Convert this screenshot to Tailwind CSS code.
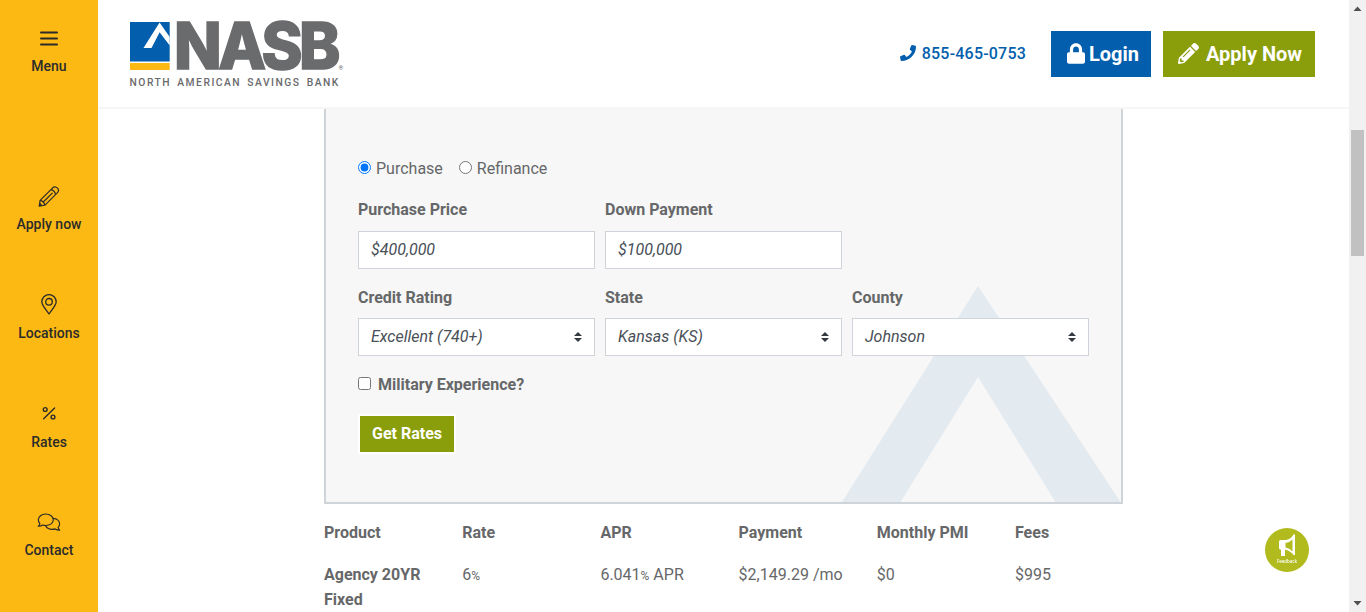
<!DOCTYPE html>
<html lang="en">
<head>
<meta charset="utf-8">
<title>NASB Rates</title>
<script src="https://cdn.jsdelivr.net/npm/@tailwindcss/browser@4"></script>
</head>
<body class="flex h-[612px] w-[1366px] overflow-hidden bg-white font-['Roboto',sans-serif] text-base text-[#666769]">

<nav class="flex w-[98px] shrink-0 flex-col items-center bg-[#fdb913] text-sm font-medium leading-5 text-[#2b2b2b]">
  <a class="flex h-[158px] flex-col items-center pt-7">
    <svg class="h-5 w-5" viewBox="0 0 20 20" fill="none" stroke="currentColor" stroke-width="2" stroke-linecap="round"><path d="M2 4.4h16M2 10.5h16M2 16.6h16"/></svg>
    <span class="mt-2">Menu</span>
  </a>
  <a class="flex h-[109px] flex-col items-center pt-7">
    <svg class="h-[22px] w-[22px]" viewBox="0 0 22 22" fill="none" stroke="currentColor" stroke-width="1.2" stroke-linejoin="round"><path d="M1.300 20l.8-5.600L14.700 1.800q1.800-1.600 3.600-.6 1.900 1 2.200 2.700.2 1.500-1 2.700L7 19.200z"/><path d="M12.900 3.600q3.800.7 4.600 4.800M2.100 14.400q3.700.7 4.900 4.800M4.800 16.500l9.700-9.700M1.300 20l.5-2.500 1.900 1.900z"/></svg>
    <span class="mt-1.5">Apply now</span>
  </a>
  <a class="flex h-[109px] flex-col items-center pt-[27px]">
    <svg class="h-[22px] w-[18px]" viewBox="0 0 18 22" fill="none" stroke="currentColor" stroke-width="1.300"><path d="M9 20C6.600 16.300 1.800 11.500 1.800 7.800a7.200 7.200 0 0 1 14.400 0C16.200 11.500 11.400 16.300 9 20z" stroke-linejoin="round"/><circle cx="9" cy="7.800" r="3.300"/></svg>
    <span class="mt-[7px]">Locations</span>
  </a>
  <a class="flex h-[109px] flex-col items-center pt-[29px]">
    <svg class="h-4 w-4" viewBox="0 0 16 16" fill="none" stroke="currentColor" stroke-width="1.400" stroke-linecap="round"><path d="M2.700 13.700L13.600 3"/><circle cx="4.200" cy="4.500" r="1.900"/><circle cx="12" cy="12" r="1.900"/></svg>
    <span class="mt-[11px]">Rates</span>
  </a>
  <a class="flex h-[109px] flex-col items-center pt-7">
    <svg class="h-[18px] w-6" viewBox="0 0 24 18" fill="none" stroke="currentColor" stroke-width="1.200" stroke-linejoin="round" stroke-linecap="round"><path d="M8.800 1C13 1 16.300 3.500 16.300 6.800S13 12.500 8.800 12.500q-1.600 0-3-.5-1.800 1.300-4.500 1.200 1.300-1.200 1.600-2.700Q1.300 9 1.300 6.800C1.300 3.500 4.600 1 8.800 1z"/><path d="M16.300 5.300c3.700.3 6.300 2.700 6.300 5.600q0 2-1.500 3.500.3 1.500 1.600 2.700-2.700.1-4.500-1.200-1.400.5-3 .5-4.300 0-6.600-3.500"/></svg>
    <span class="mt-[9px]">Contact</span>
  </a>
</nav>

<div class="flex min-w-0 flex-1 flex-col">
  <header class="flex h-[109px] shrink-0 items-start border-b-2 border-[#f6f6f6]">
    <svg class="ml-[31px] mt-[8px] h-[86px] w-[222px] shrink-0 overflow-visible" viewBox="0 -10 222 86">
      <path fill="#035fad" d="M1 4h39.700v39.500H1z"/><path fill="#fdb913" d="M1 45h39.700v7H1z"/>
      <path fill="#fff" d="M30.600 4.500L40.700 19V27.500l-10.100-13.300L22.500 30h-8z"/>
      <text x="45" y="51.300" font-family="Inter" font-weight="800" font-size="64" letter-spacing="-3.500" textLength="163" lengthAdjust="spacingAndGlyphs" fill="#6a6b6d" stroke="#6a6b6d" stroke-width="1.500">NASB</text>
      <text x="209.500" y="51.500" font-family="Roboto" font-size="6" fill="#6a6b6d">®</text>
      <text x=".5" y="67.800" font-family="Roboto" font-weight="500" font-size="10.300" textLength="208.800" fill="#6a6b6d" word-spacing="2">NORTH AMERICAN SAVINGS BANK</text>
    </svg>
    <div class="ml-auto mr-[34px] mt-[31px] flex items-center">
      <a class="mr-[25px] flex items-center gap-1.5 text-base font-medium tracking-[0.2px] text-[#035fad]">
        <svg class="-mt-0.5 h-4 w-4" viewBox="0 0 512 512" fill="currentColor"><path d="M493.4 24.6l-104-24c-11.3-2.6-22.9 3.3-27.5 13.9l-48 112c-4.2 9.8-1.4 21.3 6.9 28l60.6 49.6c-36 76.7-98.9 140.5-177.2 177.2l-49.6-60.6c-6.8-8.3-18.2-11.1-28-6.9l-112 48C3.9 366.5-2 378.1.6 389.4l24 104C27.1 504.2 36.700 512 48 512c256.1 0 464-207.5 464-464 0-11.2-7.7-20.9-18.6-23.4z"/></svg>
        <span>855-465-0753</span>
      </a>
      <a class="mr-3 flex h-[46px] w-[100px] items-center gap-1 bg-[#035fad] pl-4 text-xl font-bold text-white">
        <svg class="-mt-px h-[21px] w-[18px] shrink-0" viewBox="0 0 448 512" fill="currentColor"><path d="M400 224h-24v-72C376 68.2 307.8 0 224 0S72 68.2 72 152v72H48c-26.500 0-48 21.500-48 48v192c0 26.500 21.500 48 48 48h352c26.500 0 48-21.500 48-48V272c0-26.500-21.500-48-48-48zm-104 0H152v-72c0-39.700 32.300-72 72-72s72 32.300 72 72v72z"/></svg>
        <span>Login</span>
      </a>
      <a class="flex h-[46px] w-[152px] items-center gap-[7px] bg-[#8a9e0b] pl-[15px] text-xl font-bold text-white">
        <svg class="-mt-px h-[21px] w-[21px] shrink-0" viewBox="0 0 512 512" fill="currentColor"><path d="M497.9 142.1l-46.1 46.1c-4.7 4.7-12.3 4.7-17 0l-111-111c-4.7-4.7-4.7-12.3 0-17l46.1-46.1c18.7-18.7 49.1-18.7 67.9 0l60.1 60.1c18.8 18.7 18.8 49.1 0 67.9zM284.2 99.8L21.6 362.4.4 483.9c-2.9 16.4 11.4 30.6 27.8 27.8l121.5-21.3 262.6-262.6c4.7-4.7 4.7-12.3 0-17l-111-111c-4.8-4.7-12.4-4.7-17.1 0zM124.1 339.9c-5.5-5.5-5.5-14.3 0-19.8l154-154c5.5-5.5 14.3-5.5 19.8 0s5.5 14.3 0 19.8l-154 154c-5.5 5.5-14.3 5.5-19.8 0zM88 424h48v36.3l-64.5 11.3-31.1-31.1L51.7 376H88v48z"/></svg>
        <span>Apply Now</span>
      </a>
    </div>
  </header>

  <main class="ml-[226px]">
    <form class="relative h-[395px] w-[799px] border-2 border-t-0 border-[#ced4da] bg-[#f7f7f7] px-8 pt-12">
      <svg class="absolute bottom-0 right-0 h-[216px] w-[280px]" viewBox="0 0 280 216"><path fill="#e3eaf0" d="M137 0L279.500 216H214.500L137 91 59.500 216H1z"/></svg>
      <div class="relative">
        <div class="flex h-6 items-center">
          <label class="flex items-center gap-[5px]"><input type="radio" name="type" checked class="mb-[3px] h-[13px] w-[13px]">Purchase</label>
          <label class="ml-4 flex items-center gap-[5px]"><input type="radio" name="type" class="mb-[3px] h-[13px] w-[13px]">Refinance</label>
        </div>
        <div class="mt-[17px] grid grid-cols-[repeat(3,237px)] gap-x-2.5">
          <div class="font-bold leading-6">Purchase Price<div class="mt-[9px] flex h-[38px] items-center border border-[#ced4da] bg-white pb-px pl-3 font-normal italic text-[#495057]">$400,000</div></div>
          <div class="font-bold leading-6">Down Payment<div class="mt-[9px] flex h-[38px] items-center border border-[#ced4da] bg-white pb-px pl-3 font-normal italic text-[#495057]">$100,000</div></div>
        </div>
        <div class="mt-[17px] grid grid-cols-[repeat(3,237px)] gap-x-2.5">
          <div class="font-bold leading-6">Credit Rating<div class="mt-2 flex h-[38px] items-center justify-between border border-[#ced4da] bg-white pl-3 pr-3 font-normal italic text-[#495057]"><span class="pb-px">Excellent (740+)</span><svg class="h-2.5 w-2" viewBox="0 0 4 5"><path fill="#343a40" d="M2 0L0 2h4zm0 5L0 3h4z"/></svg></div></div>
          <div class="font-bold leading-6">State<div class="mt-2 flex h-[38px] items-center justify-between border border-[#ced4da] bg-white pl-3 pr-3 font-normal italic text-[#495057]"><span class="pb-px">Kansas (KS)</span><svg class="h-2.5 w-2" viewBox="0 0 4 5"><path fill="#343a40" d="M2 0L0 2h4zm0 5L0 3h4z"/></svg></div></div>
          <div class="font-bold leading-6">County<div class="mt-2 flex h-[38px] items-center justify-between border border-[#ced4da] bg-white pl-3 pr-3 font-normal italic text-[#495057]"><span class="pb-px">Johnson</span><svg class="h-2.5 w-2" viewBox="0 0 4 5"><path fill="#343a40" d="M2 0L0 2h4zm0 5L0 3h4z"/></svg></div></div>
        </div>
        <label class="mt-[17px] flex h-6 items-center gap-[7px] font-bold"><input type="checkbox" class="mb-[3px] h-[13px] w-[13px]">Military Experience?</label>
        <button type="button" class="mt-[17px] flex h-10 w-[98px] items-center justify-center border-2 border-white bg-[#8a9e0b] font-bold text-white">Get Rates</button>
      </div>
    </form>
    <div class="grid w-[829.2px] grid-cols-6 pt-[17px]">
      <b class="leading-6">Product</b><b class="leading-6">Rate</b><b class="leading-6">APR</b><b class="leading-6">Payment</b><b class="leading-6">Monthly PMI</b><b class="leading-6">Fees</b>
      <b class="mt-[17px] pr-8 leading-[25px]">Agency 20YR Fixed</b>
      <span class="mt-[17px] leading-[25px]">6<span class="text-xs">%</span></span>
      <span class="mt-[17px] leading-[25px]">6.041<span class="text-xs">%</span> APR</span>
      <span class="mt-[17px] leading-[25px]">$2,149.29 /mo</span>
      <span class="mt-[17px] leading-[25px]">$0</span>
      <span class="mt-[17px] leading-[25px]">$995</span>
    </div>
  </main>
</div>

<div class="flex w-[17px] shrink-0 flex-col items-center bg-[#f1f1f1]">
  <svg class="h-[17px] w-[17px]" viewBox="0 0 17 17"><path fill="#505050" d="M8.500 6.500L12.500 11h-8z"/></svg>
  <div class="mt-[113px] h-[126px] w-[13px] bg-[#c1c1c1]"></div>
  <svg class="mt-auto h-[17px] w-[17px]" viewBox="0 0 17 17"><path fill="#505050" d="M8.500 10.500L12.500 6h-8z"/></svg>
</div>

<a class="fixed left-[1265px] top-[528px] h-11 w-11 rounded-full bg-[#b2bb1e]">
  <svg class="h-11 w-11" viewBox="0 0 44 44"><path fill="#fff" fill-rule="evenodd" d="M14 13.500q0-1.500 1.500-1.500h5.500Q26 11 28.500 6.500H30v20.500h-1.500Q26 23 20 21.500V28H16v-6.500h-.5q-1.500 0-1.500-1.500zM20.500 15v4.500q4 .5 7 4V11.500q-3 3.200-7 3.500z"/><text x="22" y="34.800" font-size="5.500" textLength="20" lengthAdjust="spacingAndGlyphs" text-anchor="middle" fill="#fff" font-family="Open Sans" font-weight="600">Feedback</text></svg>
</a>
</body>
</html>
